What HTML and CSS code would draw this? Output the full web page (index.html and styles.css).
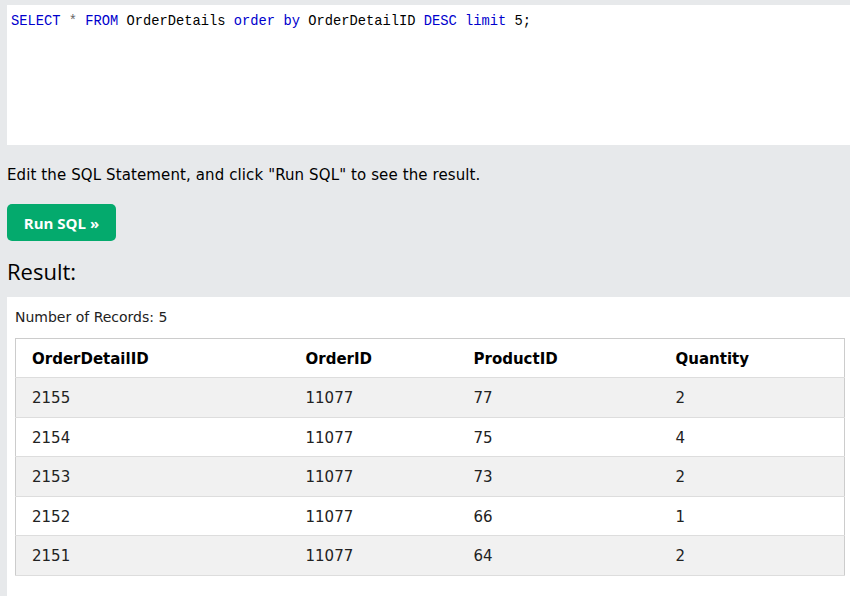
FILE: index.html
```html
<!DOCTYPE html>
<html>
<head>
<meta charset="utf-8">
<link rel="stylesheet" href="styles.css">
</head>
<body>
<div class="page">
  <div class="editor"><span class="kw">SELECT</span> <span class="op">*</span> <span class="kw">FROM</span> OrderDetails <span class="kw">order</span> <span class="kw">by</span> OrderDetailID <span class="kw">DESC</span> <span class="kw">limit</span> 5;</div>
  <p class="hint">Edit the SQL Statement, and click "Run SQL" to see the result.</p>
  <button class="run">Run SQL »</button>
  <h2 class="result-title">Result:</h2>
  <div class="result">
    <div class="count">Number of Records: 5</div>
    <table class="grid">
      <colgroup>
        <col class="c1"><col class="c2"><col class="c3"><col class="c4">
      </colgroup>
      <tr><th>OrderDetailID</th><th>OrderID</th><th>ProductID</th><th>Quantity</th></tr>
      <tr><td>2155</td><td>11077</td><td>77</td><td>2</td></tr>
      <tr><td>2154</td><td>11077</td><td>75</td><td>4</td></tr>
      <tr><td>2153</td><td>11077</td><td>73</td><td>2</td></tr>
      <tr><td>2152</td><td>11077</td><td>66</td><td>1</td></tr>
      <tr><td>2151</td><td>11077</td><td>64</td><td>2</td></tr>
    </table>
  </div>
</div>
</body>
</html>
```
FILE: styles.css
```css
html, body {
  margin: 0;
  padding: 0;
  background: #e7e9eb;
  height: 100%;
  overflow: hidden;
}
.page {
  padding: 5px 0 0 7px;
  font-family: "DejaVu Sans", Verdana, sans-serif;
  font-size: 15px;
  line-height: 1.5;
  color: #000;
}
.editor {
  background: #fff;
  height: 140px;
  box-sizing: border-box;
  padding: 7px 4px;
  font-family: "Liberation Mono", "DejaVu Sans Mono", monospace;
  font-size: 13.75px;
  line-height: 20px;
  color: #000;
}
.kw { color: #0000cd; }
.op { color: #666; }
.hint {
  margin: 0;
  padding-top: 19px;
  line-height: 22px;
  letter-spacing: 0.11px;
}
.run {
  display: block;
  margin-top: 18px;
  width: 109px;
  height: 37px;
  border: none;
  border-radius: 5px;
  background: #04aa6d;
  color: #fff;
  font-family: "Open Sans", "Noto Sans", sans-serif;
  font-weight: 700;
  font-size: 15px;
  padding: 0;
}
.result-title {
  margin: 0;
  padding: 12px 0 8px;
  font-family: "Open Sans", "Noto Sans", sans-serif;
  font-weight: 400;
  font-size: 22px;
  line-height: 36px;
}
.result {
  background: #fff;
  padding: 8px 5px 40px 8px;
  color: #000;
}
.count {
  font-size: 14px;
  line-height: 24px;
  margin-bottom: 9px;
  color: #222;
}
.grid {
  width: 100%;
  border-collapse: collapse;
  border: 1px solid #ccc;
  table-layout: fixed;
  font-size: 15px;
  line-height: 23px;
}
.c1 { width: 282px; }
.c2 { width: 168px; }
.c3 { width: 202px; }
.c4 { width: auto; }
.grid th, .grid td {
  text-align: left;
  padding: 9px 8px 7px;
  border-bottom: 1px solid #ddd;
}
.grid tr:nth-child(odd) th, .grid tr:nth-child(odd) td {
  padding-bottom: 6px;
}
.grid th:first-child, .grid td:first-child {
  padding-left: 16px;
}
.grid th { font-weight: 700; }
.grid td { color: #222; }
.grid tr:nth-child(even) { background: #f1f1f1; }
```
